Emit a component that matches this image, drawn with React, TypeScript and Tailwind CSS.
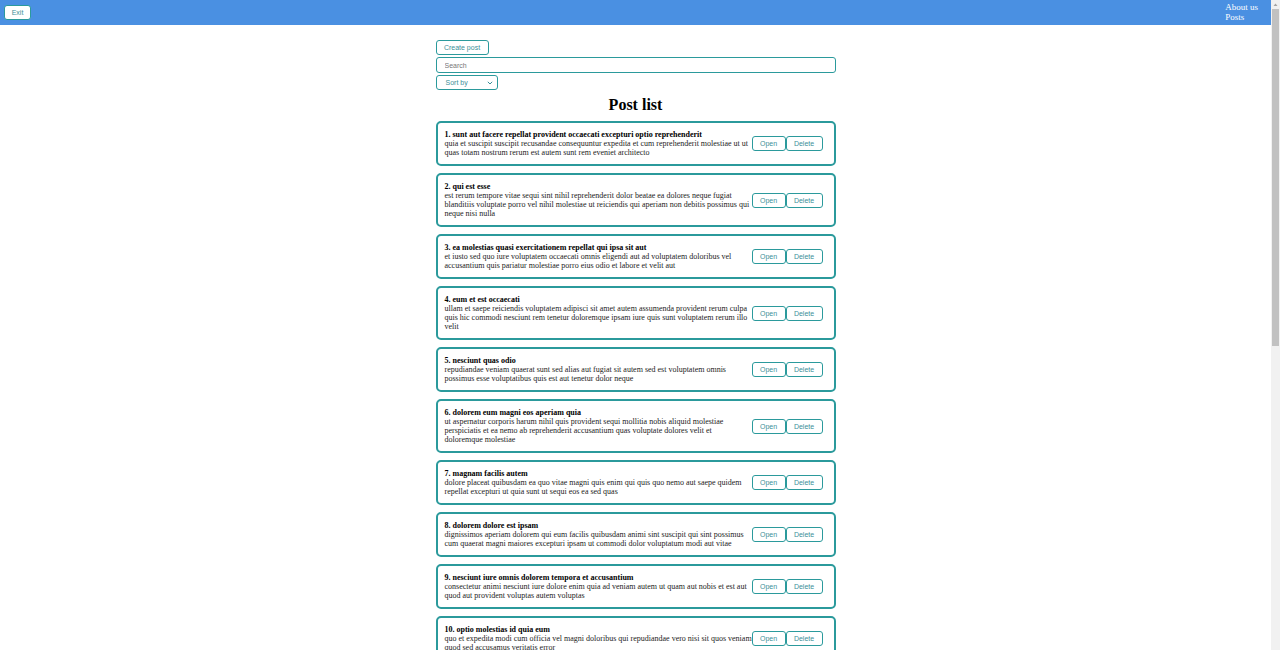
import { useState } from "react";

interface Post {
  id: number;
  title: string;
  body: string;
}

const posts: Post[] = [
  {
    id: 1,
    title: "sunt aut facere repellat provident occaecati excepturi optio reprehenderit",
    body: "quia et suscipit suscipit recusandae consequuntur expedita et cum reprehenderit molestiae ut ut quas totam nostrum rerum est autem sunt rem eveniet architecto",
  },
  {
    id: 2,
    title: "qui est esse",
    body: "est rerum tempore vitae sequi sint nihil reprehenderit dolor beatae ea dolores neque fugiat blanditiis voluptate porro vel nihil molestiae ut reiciendis qui aperiam non debitis possimus qui neque nisi nulla",
  },
  {
    id: 3,
    title: "ea molestias quasi exercitationem repellat qui ipsa sit aut",
    body: "et iusto sed quo iure voluptatem occaecati omnis eligendi aut ad voluptatem doloribus vel accusantium quis pariatur molestiae porro eius odio et labore et velit aut",
  },
  {
    id: 4,
    title: "eum et est occaecati",
    body: "ullam et saepe reiciendis voluptatem adipisci sit amet autem assumenda provident rerum culpa quis hic commodi nesciunt rem tenetur doloremque ipsam iure quis sunt voluptatem rerum illo velit",
  },
  {
    id: 5,
    title: "nesciunt quas odio",
    body: "repudiandae veniam quaerat sunt sed alias aut fugiat sit autem sed est voluptatem omnis possimus esse voluptatibus quis est aut tenetur dolor neque",
  },
  {
    id: 6,
    title: "dolorem eum magni eos aperiam quia",
    body: "ut aspernatur corporis harum nihil quis provident sequi mollitia nobis aliquid molestiae perspiciatis et ea nemo ab reprehenderit accusantium quas voluptate dolores velit et doloremque\u00a0molestiae",
  },
  {
    id: 7,
    title: "magnam facilis autem",
    body: "dolore placeat quibusdam ea quo vitae magni quis enim qui quis quo nemo aut saepe quidem repellat excepturi ut quia sunt ut sequi eos ea sed quas",
  },
  {
    id: 8,
    title: "dolorem dolore est ipsam",
    body: "dignissimos aperiam dolorem qui eum facilis quibusdam animi sint suscipit qui sint possimus cum quaerat magni maiores excepturi ipsam ut commodi dolor voluptatum modi aut vitae",
  },
  {
    id: 9,
    title: "nesciunt iure omnis dolorem tempora et accusantium",
    body: "consectetur animi nesciunt iure dolore enim quia ad veniam autem ut quam aut nobis et est aut quod aut provident voluptas autem voluptas",
  },
  {
    id: 10,
    title: "optio molestias id quia eum",
    body: "quo et expedita modi cum officia vel magni doloribus qui repudiandae vero nisi sit quos veniam quod sed accusamus veritatis error",
  },
  {
    id: 11,
    title: "et ea vero quia laudantium autem",
    body: "delectus reiciendis molestiae occaecati non minima eveniet qui voluptatibus accusamus in eum beatae sit vel qui neque voluptates ut commodi qui incidunt ut animi commodi",
  },
  {
    id: 12,
    title: "in quibusdam tempore odit est dolorem",
    body: "itaque id aut magnam praesentium quia et ea odit et ea voluptas et sapiente quia nihil amet occaecati quia id voluptatem incidunt ea est distinctio odio",
  },
  {
    id: 13,
    title: "dolorum ut in voluptas mollitia et saepe quo animi",
    body: "aut dicta possimus sint mollitia voluptas commodi quo doloremque iste corrupti reiciendis voluptatem eius rerum sit cumque quod eligendi laborum minima perferendis recusandae assumenda consectetur porro architecto ipsum ipsam",
  },
  {
    id: 14,
    title: "voluptatem eligendi optio",
    body: "fuga et accusamus dolorum perferendis illo voluptas non doloremque neque facere ad qui dolorum molestiae beatae sed aut voluptas totam sit illum",
  },
  {
    id: 15,
    title: "eveniet quod temporibus",
    body: "reprehenderit quos placeat velit minima officia dolores impedit repudiandae molestiae nam voluptas recusandae quis delectus officiis harum fugiat vitae",
  },
  {
    id: 16,
    title: "sint suscipit perspiciatis velit dolorum rerum ipsa laboriosam odio",
    body: "suscipit nam nisi quo aperiam aut asperiores eos fugit maiores voluptatibus quia voluptatem quis ullam qui in alias quia est consequatur magni mollitia accusamus ea nisi voluptate dicta",
  },
  {
    id: 17,
    title: "fugit voluptas sed molestias voluptatem provident",
    body: "eos voluptas et aut odit natus earum aspernatur fuga molestiae ullam deserunt ratione qui eos qui nihil ratione nemo velit ut aut id quo",
  },
  {
    id: 18,
    title: "voluptate et itaque vero tempora molestiae",
    body: "eveniet quo quis laborum totam consequatur non dolor ut et est repudiandae est voluptatem vel debitis et magnam",
  },
  {
    id: 19,
    title: "adipisci placeat illum aut reiciendis qui",
    body: "illum quis cupiditate provident sit magnam ea sed aut omnis veniam maiores ullam consequatur atque adipisci quo iste expedita sit quos voluptas",
  },
  {
    id: 20,
    title: "doloribus ad provident suscipit at",
    body: "qui consequuntur ducimus possimus quisquam amet similique suscipit porro ipsam amet eos veritatis officiis exercitationem vel fugit aut necessitatibus totam omnis rerum consequatur expedita quidem cumque explicabo",
  },
];

const serif = "font-['Liberation_Serif',serif]";
const sans = "font-['Liberation_Sans',Arial,sans-serif]";

function SmallButton({ label, className }: { label: string; className?: string }) {
  return (
    <button
      className={`${sans} block h-[15px] shrink-0 rounded-[3px] border-[1.5px] border-[#2b9a9c] bg-white text-[7px] leading-none text-[#3c8f99] ${className ?? ""}`}
    >
      {label}
    </button>
  );
}

function PostItem({ post }: { post: Post }) {
  return (
    <div className="flex items-center rounded-[5px] border-2 border-[#2b9a9c] py-[7px] pl-[7px] pr-[11px]">
      <div className="w-[308px] shrink-0 text-[8px] leading-[9px] text-[#1c1c1c]">
        <strong className="text-black">
          {post.id}. {post.title}
        </strong>
        <div>{post.body}</div>
      </div>
      <div className="-ml-[1px] flex">
        <SmallButton label="Open" className="w-[34px]" />
        <SmallButton label="Delete" className="w-[37px]" />
      </div>
    </div>
  );
}

// the browser's scroll bar, as it shows in the shot
function ScrollBar() {
  return (
    <div className="flex h-full w-[9px] shrink-0 flex-col items-center bg-[#f1f1f1]">
      <svg width="5" height="8" viewBox="0 0 5 8" className="mt-[1px] shrink-0">
        <path d="M2.5 2.5 L4.5 5 L0.5 5 Z" fill="#a3a3a3" />
      </svg>
      <div className="h-[337px] w-[7px] shrink-0 bg-[#c1c1c1]" />
    </div>
  );
}

export default function App() {
  const [query, setQuery] = useState("");

  return (
    <div className={`${serif} flex h-screen bg-white`}>
      <div className="h-full flex-1 overflow-y-auto [scrollbar-width:none]">
        <nav className="flex h-[25px] items-start justify-between bg-[#4a90e2] pl-[4px] pr-[13px]">
          <SmallButton label="Exit" className="mt-[5px] h-[14px] w-[27px] border-[1px]" />
          <div className="mt-[2px] flex flex-col text-[9px] leading-[10px] text-white">
            <a>About us</a>
            <a>Posts</a>
          </div>
        </nav>

        <main className="mx-auto flex w-[400px] flex-col items-start pt-[15px] pb-[40px]">
          <SmallButton label="Create post" className="w-[53px]" />
          <input
            value={query}
            onChange={(e) => setQuery(e.target.value)}
            placeholder="Search"
            className={`${sans} mt-[2px] block h-[16px] w-full rounded-[3px] border-[1.5px] border-[#2b9a9c] px-[8px] text-[7px] outline-none placeholder:text-[#777]`}
          />
          <div
            className={`${sans} mt-[2px] flex h-[15px] w-[62px] items-center justify-between rounded-[3px] border-[1.5px] border-[#2b9a9c] pt-[1px] pl-[9px] pr-[4px] text-[7px] text-[#3c8f99]`}
          >
            <span>Sort by</span>
            <svg width="6" height="4" viewBox="0 0 6 4" fill="none">
              <path d="M0.8 0.8 L3 3 L5.2 0.8" stroke="#3c8f99" strokeWidth="1" />
            </svg>
          </div>

          <h1 className="mt-[6px] mb-[7px] w-full text-center text-[16px] leading-[18px] font-bold text-black">
            Post list
          </h1>

          <div className="flex w-full flex-col gap-[7px]">
            {posts.map((post) => (
              <PostItem key={post.id} post={post} />
            ))}
          </div>
        </main>
      </div>
      <ScrollBar />
    </div>
  );
}
